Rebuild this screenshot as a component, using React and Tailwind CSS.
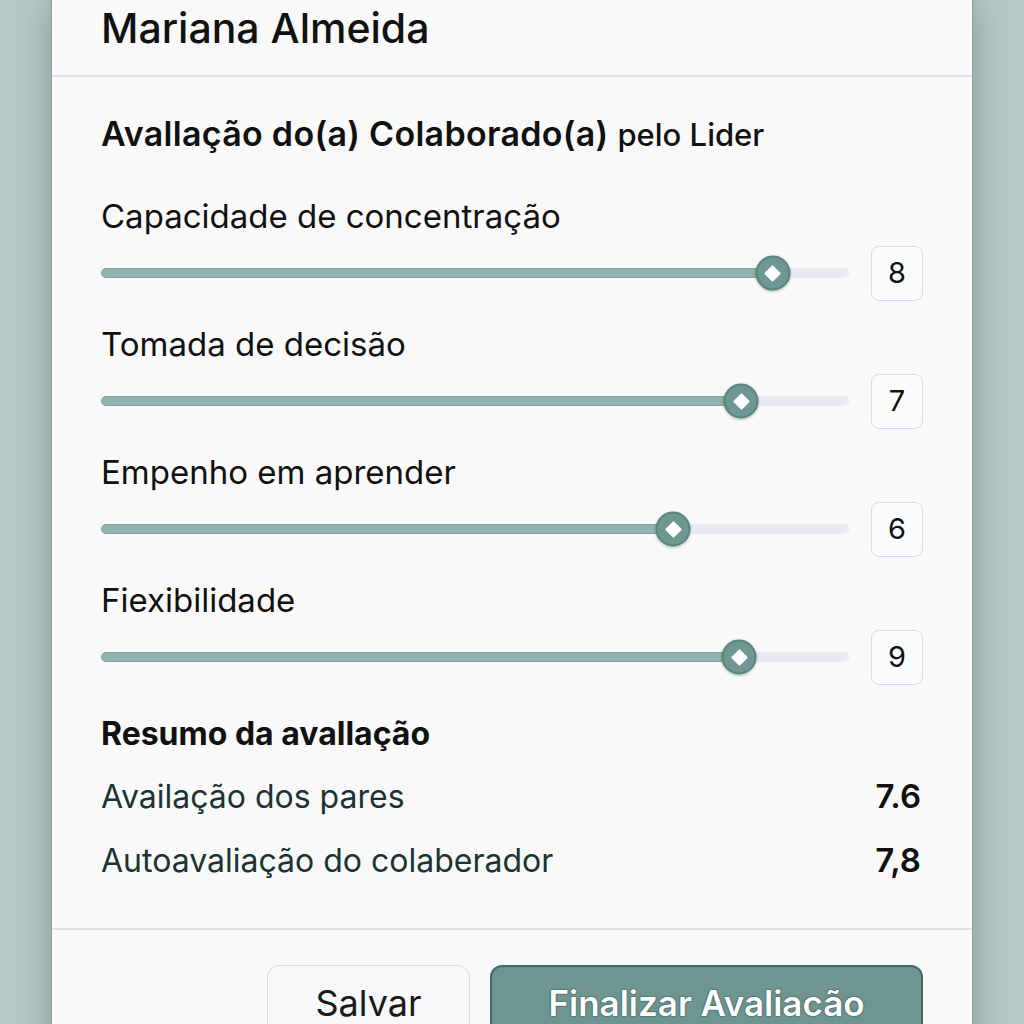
import React from 'react';

const criteria = [
    { label: 'Capacidade de concentração', value: 8, pos: 89.8 },
    { label: 'Tomada de decisão', value: 7, pos: 85.6 },
    { label: 'Empenho em aprender', value: 6, pos: 76.5 },
    { label: 'Fiexibilidade', value: 9, pos: 85.3 },
];

const summary = [
    { label: 'Availação dos pares', value: '7.6' },
    { label: 'Autoavaliação do colaberador', value: '7,8' },
];

const SliderRow = ({ label, value, pos }) => (
    <div className="flex flex-col">
        <div className="text-[33px] leading-[36px] text-[#111] mb-[11px]">{label}</div>
        <div className="flex items-center gap-[22px] h-[56px]">
            <div className="relative flex-1 h-[10px] rounded-full bg-[#e7ebee]">
                {/* filled part of the track */}
                <div
                    className="absolute left-0 top-0 h-full rounded-full bg-[#90b4af] border border-[#7ca39e]"
                    style={{ width: `${pos}%` }}
                />
                <div
                    className="absolute top-1/2 -translate-x-1/2 -translate-y-1/2 w-[35px] h-[35px] rounded-full bg-[#6e9792] border-2 border-[#5b847f] shadow-[0_1px_3px_rgba(40,70,66,0.35)] flex items-center justify-center"
                    style={{ left: `${pos}%` }}
                >
                    <div className="w-[12px] h-[12px] bg-white rotate-45 rounded-[1px]" />
                </div>
            </div>
            <div className="w-[52px] h-[55px] rounded-[8px] border-[1.5px] border-[#d4dce6] bg-[#fafbfc] flex items-center justify-center text-[29px] text-[#111]">
                {value}
            </div>
        </div>
    </div>
);

const App = () => {
    return (
        <div
            className="h-[1024px] overflow-hidden bg-[#b5c8c5] flex justify-center"
            style={{ fontFamily: 'Inter, "Noto Sans", sans-serif' }}
        >
            <div className="w-[922px] h-[1100px] bg-[#f9f9fa] border-x border-[#86a6a2] shadow-[0_0_30px_rgba(70,105,100,0.45)] flex flex-col">
                {/* Header */}
                <div className="px-[49px] pb-[19px] border-b-2 border-[#dcdfe6]">
                    <h1 className="text-[41px] leading-[56px] font-medium text-[#111]">Mariana Almeida</h1>
                </div>

                {/* Body */}
                <div className="px-[49px] pt-[39px] pb-[47px] border-b-2 border-[#dde1e6]">
                    <h2 className="text-[34px] leading-[36px] font-semibold text-[#111] tracking-[0.3px] whitespace-nowrap">
                        Avallação do(a) Colaborado(a) <span className="text-[31px] font-medium tracking-normal">pelo Lider</span>
                    </h2>

                    <div className="flex flex-col gap-[25px] mt-[45px]">
                        {criteria.map((c) => (
                            <SliderRow key={c.label} {...c} />
                        ))}
                    </div>

                    <h3 className="mt-[31px] text-[32px] leading-[36px] font-bold text-[#111]">Resumo da avallação</h3>

                    <div className="flex flex-col gap-[24px] mt-[25px]">
                        {summary.map((s) => (
                            <div key={s.label} className="flex items-center justify-between h-[40px]">
                                <span className="text-[32px] text-[#1c3333]">{s.label}</span>
                                <span className="text-[33px] font-semibold text-[#111] pr-[2px]">{s.value}</span>
                            </div>
                        ))}
                    </div>
                </div>

                {/* Footer */}
                <div className="px-[49px] pt-[35px] flex justify-end gap-[20px]">
                    <button className="w-[203px] h-[76px] rounded-[12px] border-[1.5px] border-[#d3dbe3] bg-[#f7f8f9] text-[36px] text-[#1a1a1a]">
                        Salvar
                    </button>
                    <button className="w-[433px] h-[76px] rounded-[12px] border-2 border-[#426b67] bg-[#6f9591] text-[35px] font-semibold text-white [text-shadow:0_0_2px_#2c4c48,0_0_1px_#2c4c48]">
                        Finalizar Avaliacão
                    </button>
                </div>
            </div>
        </div>
    );
};

export default App;
